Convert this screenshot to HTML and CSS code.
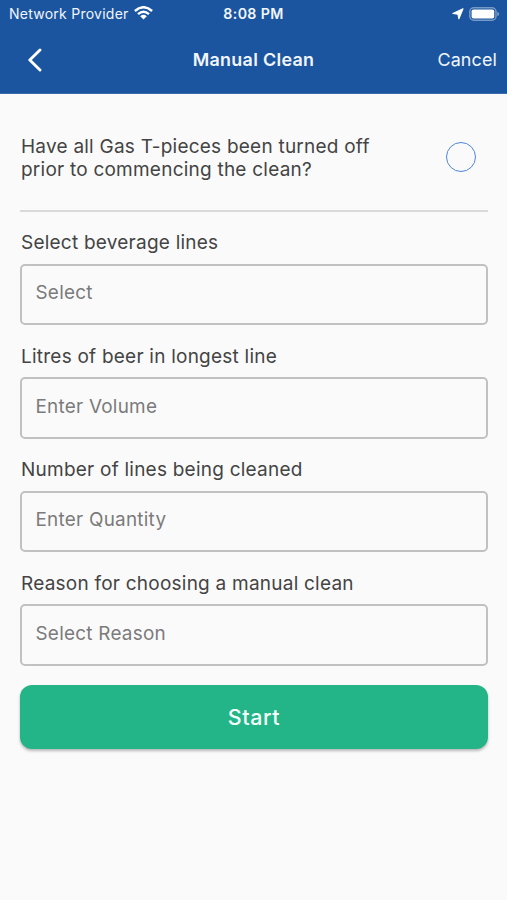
FILE: index.html
```html
<!DOCTYPE html>
<html lang="en">
<head>
<meta charset="utf-8">
<title>Manual Clean</title>
<link rel="stylesheet" href="styles.css">
</head>
<body>
<header class="header">
  <div class="status">
    <div class="carrier"><span class="carrier-name">Network Provider</span>
      <svg class="wifi" width="19" height="14" viewBox="0 0 19 14"><g fill="none" stroke="#fff" stroke-width="2.4"><path d="M.9 5Q9.5-2.6 18.1 5"/><path d="M4 8.2Q9.5 3.2 15 8.2"/></g><path d="M6.2 10.2Q9.5 7.3 12.8 10.2L9.5 13.5Z" fill="#fff"/></svg>
    </div>
    <time class="clock">8:08 PM</time>
    <div class="indicators">
      <svg width="12" height="12" viewBox="0 0 12 12"><path d="M11 .8 6.9 10.8 6 6.3.9 5.5Z" fill="#fff" stroke="#fff" stroke-width="1.1" stroke-linejoin="round"/></svg>
      <svg width="31" height="14" viewBox="0 0 31 14"><rect x=".8" y=".8" width="26.2" height="12.4" rx="4" fill="none" stroke="#fff" stroke-opacity=".4" stroke-width="1.5"/><rect x="2.6" y="2.5" width="22.6" height="9" rx="1.8" fill="#fff"/><path d="M28.4 4.7Q30.2 5.4 30.2 7T28.4 9.3Z" fill="#fff" fill-opacity=".45"/></svg>
    </div>
  </div>
  <nav class="navbar">
    <button class="back" aria-label="Back"><svg width="16" height="26" viewBox="0 0 16 26"><path d="M14 3 3.8 13 14 23" fill="none" stroke="#fff" stroke-width="2.9" stroke-linecap="round" stroke-linejoin="round"/></svg></button>
    <h1 class="title">Manual Clean</h1>
    <button class="cancel">Cancel</button>
  </nav>
</header>
<main class="form">
  <div class="question"><p>Have all Gas T-pieces been turned off<br>prior to commencing the clean?</p><span class="radio" role="radio" aria-checked="false"></span></div>
  <div class="field"><div class="label">Select beverage lines</div><div class="input">Select</div></div>
  <div class="field"><div class="label">Litres of beer in longest line</div><div class="input">Enter Volume</div></div>
  <div class="field"><div class="label">Number of lines being cleaned</div><div class="input">Enter Quantity</div></div>
  <div class="field"><div class="label">Reason for choosing a manual clean</div><div class="input">Select Reason</div></div>
  <button class="start">Start</button>
</main>
</body>
</html>
```
FILE: styles.css
```css
* { box-sizing: border-box; }
body { margin: 0; min-height: 900px; background: #fafafa; color: #444; font-family: Inter, "Liberation Sans", sans-serif; }
button { border: 0; padding: 0; background: none; color: inherit; font: inherit; }
svg { display: block; }
.header { height: 94px; background: #1c559f; color: #f1f6fc; border-bottom: 1px solid #3b6dae; }
.status { height: 28px; display: grid; grid-template-columns: 1fr auto 1fr; align-items: center; padding: 0 8px; font-size: 14px; }
.carrier { display: flex; align-items: center; gap: 5px; padding: 0 0 1px 1px; }
.carrier-name { letter-spacing: .25px; white-space: nowrap; }
.wifi { margin-top: -1px; }
.clock { font-size: 14.2px; font-weight: 600; letter-spacing: .35px; line-height: 17px; padding-bottom: 1px; }
.indicators { display: flex; justify-content: flex-end; align-items: center; gap: 5px; margin: -1px -1px 0 0; }
.navbar { height: 62px; display: grid; grid-template-columns: 1fr auto 1fr; align-items: center; padding: 0 10px; }
.back { justify-self: start; margin: 1px 0 0 16px; }
.title { margin: 0; font-size: 17.9px; font-weight: 600; letter-spacing: .3px; }
.cancel { justify-self: end; font-size: 17.9px; letter-spacing: .15px; }
.form { padding: 0 19px 0 20px; }
.question { height: 118px; display: flex; align-items: center; justify-content: space-between; padding: 9px 12px 0 1px; border-bottom: 2px solid #d9dad9; }
.question p { margin: 2px 0 0; font-size: 19px; line-height: 23px; letter-spacing: .23px; }
.radio { width: 30px; height: 30px; border: 1.5px solid #4f86d8; border-radius: 50%; }
.field { height: 113.6px; padding-top: 17px; }
.label { height: 34.5px; line-height: 27px; padding-left: 1px; font-size: 19px; letter-spacing: .23px; }
.input { height: 61.5px; border: 2px solid #c1c1c1; border-radius: 5px; padding: 0 13.5px 3px; display: flex; align-items: center; color: #7b7b7b; font-size: 18.9px; letter-spacing: .25px; }
.start { display: block; width: 100%; height: 63.5px; margin-top: 18.8px; padding-top: 1px; border-radius: 12px; background: #23b588; color: #f5fffb; font-size: 21.4px; font-weight: 500; letter-spacing: .6px; box-shadow: 0 2px 3px #0004; }
```
